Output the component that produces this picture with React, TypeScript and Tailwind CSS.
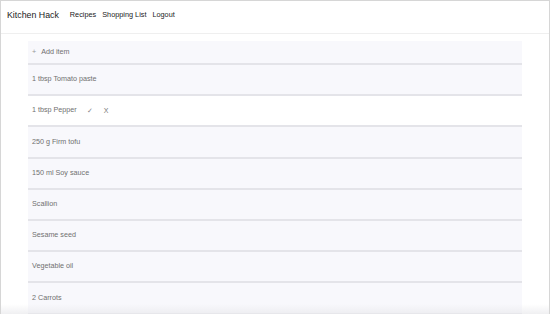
const items = [
  "1 tbsp Tomato paste",
  "1 tbsp Pepper",
  "250 g Firm tofu",
  "150 ml Soy sauce",
  "Scallion",
  "Sesame seed",
  "Vegetable oil",
  "2 Carrots",
];

export default function App() {
  return (
    <div
      className="relative h-[314px] w-[550px] overflow-hidden border-x border-t border-[#d6d6d6] bg-white"
      style={{ fontFamily: "'Liberation Sans', Arial, sans-serif" }}
    >
      <nav className="flex h-[33px] items-start border-b border-[#efefef] pl-[6px] pt-[8px]">
        <span className="text-[8.8px] leading-[12px] text-[#222]">Kitchen Hack</span>
        <div className="ml-[11px] flex gap-[6px] text-[7.3px] leading-[12px] text-[#222]">
          <a>Recipes</a>
          <a>Shopping List</a>
          <a>Logout</a>
        </div>
      </nav>

      <ul className="ml-[27px] mt-[7px] w-[494px] border-b-2 border-[#e4e4e9] text-[7.2px] text-[#707070]">
        <li className="flex h-[22px] items-center bg-[#f8f8fc] pl-[4px]">
          <span className="text-[#999]">+</span>
          <span className="ml-[5px]">Add item</span>
        </li>
        {items.map((item) => {
          const editing = item === "1 tbsp Pepper";
          return (
            <li
              key={item}
              className={`flex h-[31.2px] items-center border-t-2 border-[#e4e4e9] pl-[4px] ${editing ? "bg-white" : "bg-[#f8f8fc]"}`}
            >
              <span>{item}</span>
              {editing && (
                <>
                  <span className="ml-[10px] text-[7px] text-[#888]">✓</span>
                  <span className="ml-[11px] text-[7px] text-[#777]">X</span>
                </>
              )}
            </li>
          );
        })}
      </ul>

      <div className="pointer-events-none absolute inset-x-0 bottom-0 h-[10px] bg-gradient-to-b from-transparent to-[#e9e9ec]/70" />
    </div>
  );
}
